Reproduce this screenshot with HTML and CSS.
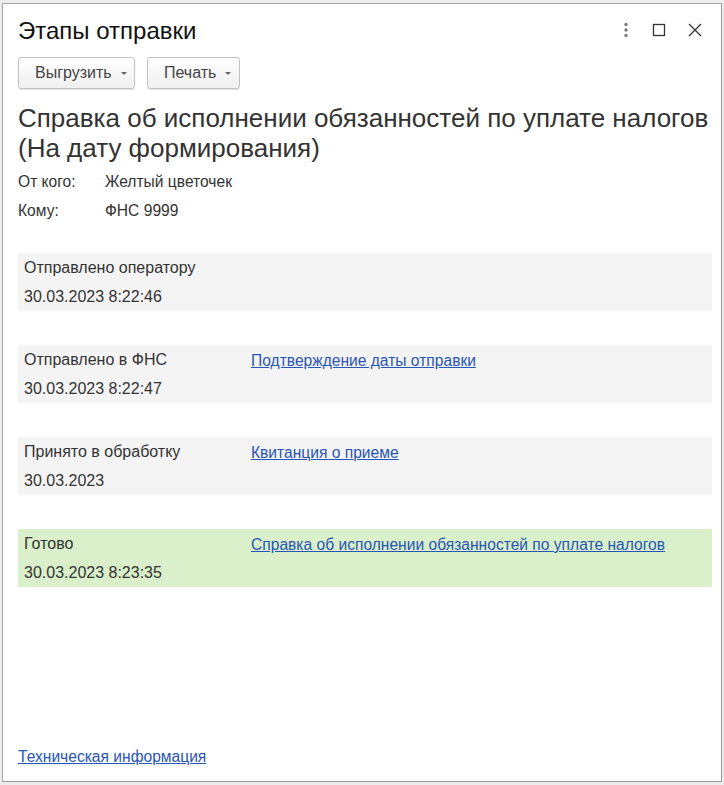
FILE: index.html
```html
<!DOCTYPE html>
<html lang="ru">
<head>
<meta charset="utf-8">
<title>Этапы отправки</title>
<link rel="stylesheet" href="styles.css">
</head>
<body>
<div class="window">
  <div class="titlebar">
    <div class="title">Этапы отправки</div>
    <div class="controls">
      <svg class="ico" width="14" height="16" viewBox="0 0 14 16"><circle cx="7" cy="2.5" r="1.7" fill="#7a7a7a"/><circle cx="7" cy="8" r="1.7" fill="#7a7a7a"/><circle cx="7" cy="13.5" r="1.7" fill="#7a7a7a"/></svg>
      <svg class="ico" width="14" height="14" viewBox="0 0 14 14"><rect x="1.5" y="1.5" width="11" height="11" fill="none" stroke="#333" stroke-width="1.3"/></svg>
      <svg class="ico" width="14" height="14" viewBox="0 0 14 14"><path d="M1 1L13 13M13 1L1 13" stroke="#333" stroke-width="1.3" fill="none"/></svg>
    </div>
  </div>
  <div class="toolbar">
    <button class="btn btn-wide">Выгрузить <span class="caret"></span></button>
    <button class="btn">Печать <span class="caret"></span></button>
  </div>
  <h1 class="heading">Справка об исполнении обязанностей по уплате налогов (На дату формирования)</h1>
  <div class="meta">
    <div class="meta-row"><span class="meta-label">От кого:</span><span>Желтый цветочек</span></div>
    <div class="meta-row"><span class="meta-label">Кому:</span><span>ФНС 9999</span></div>
  </div>
  <div class="stages">
    <div class="stage">
      <div class="stage-info"><div class="line">Отправлено оператору</div><div class="line">30.03.2023 8:22:46</div></div>
      <div class="stage-doc"></div>
    </div>
    <div class="stage">
      <div class="stage-info"><div class="line">Отправлено в ФНС</div><div class="line">30.03.2023 8:22:47</div></div>
      <div class="stage-doc"><a class="link" href="#">Подтверждение даты отправки</a></div>
    </div>
    <div class="stage">
      <div class="stage-info"><div class="line">Принято в обработку</div><div class="line">30.03.2023</div></div>
      <div class="stage-doc"><a class="link" href="#">Квитанция о приеме</a></div>
    </div>
    <div class="stage stage-done">
      <div class="stage-info"><div class="line">Готово</div><div class="line">30.03.2023 8:23:35</div></div>
      <div class="stage-doc"><a class="link" href="#">Справка об исполнении обязанностей по уплате налогов</a></div>
    </div>
  </div>
  <div class="footer"><a class="link" href="#">Техническая информация</a></div>
</div>
</body>
</html>
```
FILE: styles.css
```css
html, body {
  margin: 0;
  padding: 0;
}
body {
  background: #ececec;
  width: 724px;
  height: 785px;
  overflow: hidden;
  font-family: "Liberation Sans", Arial, sans-serif;
  color: #333;
}
.window {
  box-sizing: border-box;
  margin: 3px 0 0 2px;
  width: 720px;
  height: 779px;
  background: #fff;
  border: 1px solid #a6a6a6;
  border-right-color: #999;
  border-bottom-color: #9c9c9c;
  padding: 0 9px 0 15px;
  display: flex;
  flex-direction: column;
}
.titlebar {
  height: 51px;
  display: flex;
  align-items: center;
  justify-content: space-between;
  padding-top: 1px;
  box-sizing: border-box;
}
.title {
  font-size: 24px;
  color: #111;
  padding-top: 1px;
}
.controls {
  display: flex;
  align-items: center;
  margin-right: 10px;
}
.ico {
  display: block;
}
.controls .ico:nth-child(1) { margin-right: 19px; }
.controls .ico:nth-child(2) { margin-right: 22px; }
.toolbar {
  display: flex;
  gap: 12px;
  margin-top: 2px;
}
.btn {
  height: 32px;
  box-sizing: border-box;
  border: 1px solid #c2c2c2;
  border-radius: 3px;
  background: linear-gradient(#ffffff, #f0f0f0);
  box-shadow: 0 1px 1px rgba(0,0,0,0.12);
  font-family: "Liberation Sans", Arial, sans-serif;
  font-size: 16px;
  color: #444;
  padding: 0 10px 0 16px;
  display: flex;
  align-items: center;
  width: 93px;
}
.btn-wide {
  width: 117px;
}
.caret {
  display: inline-block;
  width: 0;
  height: 0;
  border-left: 3px solid transparent;
  border-right: 3px solid transparent;
  border-top: 3px solid #666;
  margin-left: 9px;
  margin-top: 1px;
}
.heading {
  margin: 14px 0 0;
  font-size: 26px;
  line-height: 30px;
  font-weight: normal;
  color: #333;
}
.meta {
  margin-top: 4px;
  font-size: 15.6px;
}
.meta-row {
  height: 29px;
  line-height: 29px;
  display: flex;
}
.meta-label {
  width: 87px;
}
.stages {
  margin-top: 28px;
  display: flex;
  flex-direction: column;
  gap: 34px;
}
.stage {
  height: 58px;
  background: #f4f4f4;
  display: flex;
  padding: 0 6px;
  font-size: 16px;
}
.stage-done {
  background: #d9f0ca;
}
.stage-info {
  width: 227px;
}
.line {
  height: 29px;
  line-height: 29px;
}
.stage-doc {
  line-height: 29px;
  padding-top: 1px;
}
.link {
  color: #2855b5;
  text-decoration: underline;
  font-size: 15.6px;
}
.footer {
  margin-top: auto;
  margin-bottom: 14px;
  line-height: 20px;
}
```
